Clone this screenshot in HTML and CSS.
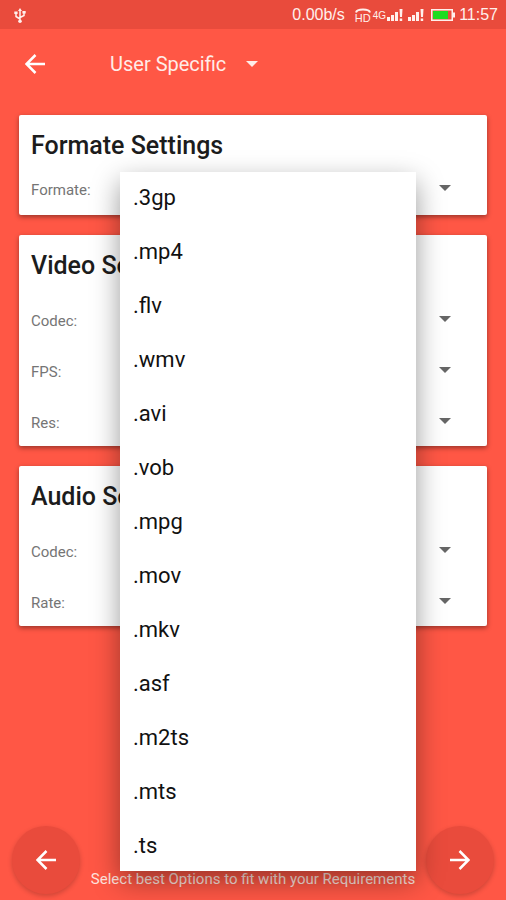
FILE: index.html
```html
<!DOCTYPE html>
<html lang="en">
<head>
  <meta charset="utf-8">
  <meta name="viewport" content="width=device-width, initial-scale=1">
  <title>User Specific</title>
  <link rel="stylesheet" href="styles.css">
</head>
<body>
  <svg class="defs" width="0" height="0" aria-hidden="true">
    <symbol id="caret" viewBox="0 0 12 6"><path d="M0 0h12L6 6z"/></symbol>
    <symbol id="arrow-left" viewBox="0 0 20 20"><path d="M20 10H1.500M10.500 1L1.500 10l9 9" fill="none" stroke="currentColor" stroke-width="2.500"/></symbol>
    <symbol id="arrow-right" viewBox="0 0 20 20"><path d="M0 10h18.500M9.500 1l9 9-9 9" fill="none" stroke="currentColor" stroke-width="2.500"/></symbol>
    <symbol id="signal" viewBox="0 0 16 12"><path d="M0 8h3v4H0zM4 6h3v6H4zM8 3h3v9H8zM12.500 0h3l-.5 8h-2zM12.700 9.500h2.500V12h-2.500z"/></symbol>
  </svg>

  <div class="status">
    <svg class="usb" viewBox="0 0 12 15" aria-hidden="true">
      <path d="M6 2v11M6 11L2 8.500V5M6 9.500l4-2V4" fill="none" stroke="currentColor" stroke-width="1.500"/>
      <path d="M6 0l2 3H4zM.3 3.500h3.300v2.500H.3zM8.400 3h3.300v2.500H8.400z"/>
      <circle cx="6" cy="13.200" r="1.800"/>
    </svg>
    <span class="speed">0.00b/s</span>
    <span class="volte">
      <svg class="handset" viewBox="0 0 16 5" aria-hidden="true"><path d="M1 4.500C2 .5 14 .5 15 4.500" fill="none" stroke="currentColor" stroke-width="2"/></svg>
      <span>HD</span>
    </span>
    <span class="network">4G</span>
    <svg class="signal" aria-hidden="true"><use href="#signal"/></svg>
    <svg class="signal second" aria-hidden="true"><use href="#signal"/></svg>
    <svg class="battery" viewBox="0 0 24 12" aria-hidden="true">
      <path d="M.75.75h20.500v10.500H.75z" fill="none" stroke="currentColor" stroke-width="1.500"/>
      <path d="M22 3.500h2v5h-2z"/>
      <path class="charge" d="M2 2h15v8H2z"/>
    </svg>
    <time>11:57</time>
  </div>

  <header class="appbar">
    <button class="back" type="button" aria-label="Back"><svg class="arrow" aria-hidden="true"><use href="#arrow-left"/></svg></button>
    <div class="profile">
      <select aria-label="Profile"><option>User Specific</option></select>
      <svg class="caret" aria-hidden="true"><use href="#caret"/></svg>
    </div>
  </header>

  <main class="cards">
    <section class="card compact">
      <h2>Formate Settings</h2>
      <div class="field">
        <label for="format">Formate:</label>
        <select id="format"><option></option></select>
        <svg class="caret" aria-hidden="true"><use href="#caret"/></svg>
        <ul class="menu" role="listbox" aria-label="Formate">
          <li role="option">.3gp</li>
          <li role="option">.mp4</li>
          <li role="option">.flv</li>
          <li role="option">.wmv</li>
          <li role="option">.avi</li>
          <li role="option">.vob</li>
          <li role="option">.mpg</li>
          <li role="option">.mov</li>
          <li role="option">.mkv</li>
          <li role="option">.asf</li>
          <li role="option">.m2ts</li>
          <li role="option">.mts</li>
          <li role="option">.ts</li>
        </ul>
      </div>
    </section>

    <section class="card">
      <h2>Video Settings</h2>
      <div class="field">
        <label for="video-codec">Codec:</label>
        <select id="video-codec"><option></option></select>
        <svg class="caret" aria-hidden="true"><use href="#caret"/></svg>
      </div>
      <div class="field">
        <label for="fps">FPS:</label>
        <select id="fps"><option></option></select>
        <svg class="caret" aria-hidden="true"><use href="#caret"/></svg>
      </div>
      <div class="field">
        <label for="res">Res:</label>
        <select id="res"><option></option></select>
        <svg class="caret" aria-hidden="true"><use href="#caret"/></svg>
      </div>
    </section>

    <section class="card">
      <h2>Audio Settings</h2>
      <div class="field">
        <label for="audio-codec">Codec:</label>
        <select id="audio-codec"><option></option></select>
        <svg class="caret" aria-hidden="true"><use href="#caret"/></svg>
      </div>
      <div class="field">
        <label for="rate">Rate:</label>
        <select id="rate"><option></option></select>
        <svg class="caret" aria-hidden="true"><use href="#caret"/></svg>
      </div>
    </section>
  </main>

  <footer class="footer">
    <button class="fab" type="button" aria-label="Previous"><svg class="arrow" aria-hidden="true"><use href="#arrow-left"/></svg></button>
    <p>Select best Options to fit with your Requirements</p>
    <button class="fab" type="button" aria-label="Next"><svg class="arrow" aria-hidden="true"><use href="#arrow-right"/></svg></button>
  </footer>
</body>
</html>
```
FILE: styles.css
```css
* {
  box-sizing: border-box;
}

body {
  display: flex;
  flex-direction: column;
  min-height: 100vh;
  margin: 0;
  background: #ff5745;
  color: #1c1c1c;
  font-family: Roboto, sans-serif;
}

svg {
  display: block;
  fill: currentColor;
}

.defs {
  position: absolute;
}

button,
select {
  appearance: none;
  border: 0;
  background: transparent;
  color: inherit;
  font: inherit;
  padding: 0;
}

/* Status bar */
.status {
  display: flex;
  align-items: center;
  height: 29px;
  padding: 1px 8px 0 14px;
  background: #e94b3c;
  color: #fff0ec;
  font-family: "Liberation Sans", sans-serif;
  font-size: 16px;
}

.usb {
  width: 12px;
  height: 15px;
}

.speed {
  margin-left: auto;
}

.volte {
  display: flex;
  flex-direction: column;
  align-items: center;
  margin-left: 10px;
  font-size: 11px;
  font-weight: 500;
  line-height: 10px;
}

.handset {
  width: 16px;
  height: 5px;
}

.network {
  margin: 0 1px 0 2px;
  font-size: 10px;
}

.signal {
  width: 16px;
  height: 12px;
}

.second {
  margin-left: 5px;
}

.battery {
  width: 24px;
  height: 12px;
  margin: 0 4px 0 7px;
}

.charge {
  fill: #1fdc1f;
}

/* App bar */
.appbar {
  display: flex;
  align-items: center;
  height: 70px;
  padding: 0 25px;
  color: #fff;
}

.back {
  display: flex;
}

.arrow {
  width: 20px;
  height: 20px;
}

.profile {
  display: flex;
  align-items: center;
  gap: 19px;
  margin-left: 65px;
  color: #ffece8;
  font-size: 20px;
}

.caret {
  width: 12px;
  height: 6px;
}

/* Settings cards */
.cards {
  display: flex;
  flex: 1;
  flex-direction: column;
  gap: 20px;
  padding: 16px 19px;
}

.card {
  padding: 15px 12px 0;
  border-radius: 2px;
  background: #fff;
  box-shadow: 0 2px 5px rgba(0, 0, 0, 0.4);
}

.card h2 {
  margin: 0 0 16px;
  font-size: 25px;
  font-weight: 500;
  line-height: 32px;
}

.compact {
  padding-bottom: 2px;
}

.compact h2 {
  margin-bottom: 5px;
}

.field {
  position: relative;
  display: grid;
  grid-template-columns: 89px 1fr 12px 24px;
  align-items: center;
  height: 46px;
  color: #757575;
  font-size: 15px;
}

.field + .field {
  margin-top: 5px;
}

.field select {
  grid-column: 2 / -1;
  grid-row: 1;
  height: 100%;
}

.field .caret {
  grid-column: 3;
  grid-row: 1;
  margin-bottom: 5px;
  color: #666;
  pointer-events: none;
}

/* Open format list */
.menu {
  position: absolute;
  z-index: 1;
  top: 5px;
  right: 59px;
  left: 89px;
  display: grid;
  gap: 4px;
  margin: 0;
  padding: 1px 13px 0;
  background: #fff;
  box-shadow: 0 10px 26px rgba(0, 0, 0, 0.4);
  color: #111;
  font-size: 22px;
  line-height: 50px;
  list-style: none;
}

/* Footer */
.footer {
  display: flex;
  align-items: center;
  justify-content: space-between;
  padding: 0 12px 6px;
}

.footer p {
  align-self: flex-end;
  margin: 0 0 4px;
  color: #ffe3de;
  font-size: 15px;
  line-height: 22px;
}

.fab {
  display: flex;
  align-items: center;
  justify-content: center;
  width: 68px;
  height: 68px;
  border-radius: 50%;
  background: #e94b3c;
  box-shadow: 0 2px 5px rgba(0, 0, 0, 0.2);
  color: #fff;
}
```
